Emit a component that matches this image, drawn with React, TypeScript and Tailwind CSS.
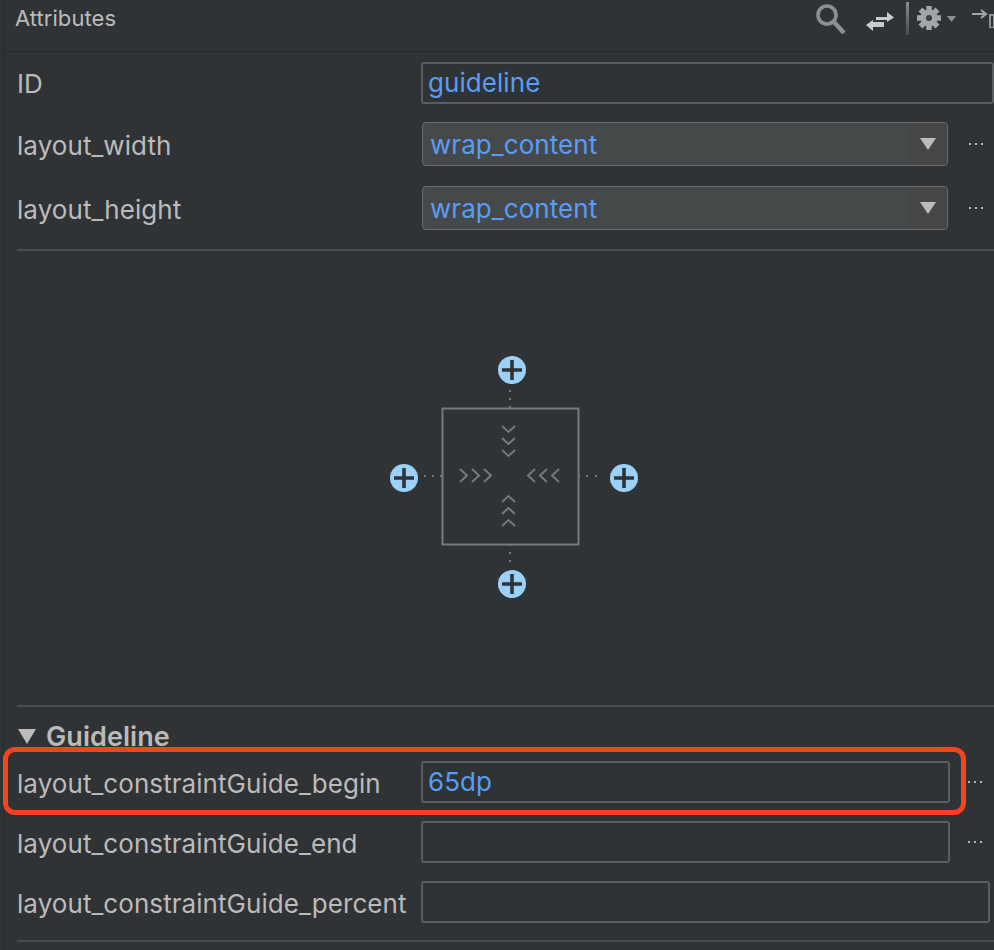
const Dots = () => (
  <svg width="16" height="4" viewBox="0 0 16 4" className="shrink-0">
    <rect x="1" y="1" width="2" height="2" fill="#b4b6b7" />
    <rect x="7" y="1" width="2" height="2" fill="#b4b6b7" />
    <rect x="13" y="1" width="2" height="2" fill="#b4b6b7" />
  </svg>
);

const Plus = ({ cx, cy }: { cx: number; cy: number }) => (
  <g>
    <circle cx={cx} cy={cy} r="14" fill="#9bd0f7" />
    <path
      d={`M${cx - 10} ${cy}H${cx + 10}M${cx} ${cy - 10}V${cy + 10}`}
      stroke="#2f3336"
      strokeWidth="3.6"
    />
  </g>
);

const Gear = () => (
  <svg width="24" height="24" viewBox="0 0 24 24" className="ml-[8px] mt-[6px]">
    {[0, 45, 90, 135].map((angle) => (
      <rect key={angle} x="9.25" y="0" width="5.5" height="24" fill="#a3a5a6" transform={`rotate(${angle} 12 12)`} />
    ))}
    <circle cx="12" cy="12" r="8.5" fill="#a3a5a6" />
    <circle cx="12" cy="12" r="3" fill="#3a3d3f" />
  </svg>
);

const ConstraintWidget = () => {
  const dots = [
    [130, 46],
    [130, 54],
    [130, 62],
    [45, 131],
    [53, 131],
    [61, 131],
    [199, 131],
    [207, 131],
    [216, 131],
    [130, 200],
    [130, 208],
    [130, 216],
  ];
  return (
    <svg width="270" height="260" viewBox="0 0 270 260">
      <rect x="62.5" y="63.5" width="136" height="136" fill="none" stroke="#77797a" strokeWidth="2" />
      {dots.map(([x, y]) => (
        <rect key={`${x}-${y}`} x={x - 1} y={y - 1} width="2" height="2" fill="#77797a" />
      ))}
      <g fill="none" stroke="#77797a" strokeWidth="2">
        <path d="M122 81l6.5 6 6.5-6M122 93l6.5 6 6.5-6M122 105l6.5 6 6.5-6" />
        <path d="M122 157l6.5-6 6.5 6M122 169l6.5-6 6.5 6M122 181l6.5-6 6.5 6" />
        <path d="M80 124l7 6.5-7 6.5M92 124l7 6.5-7 6.5M104 124l7 6.5-7 6.5" />
        <path d="M155 124l-7 6.5 7 6.5M167 124l-7 6.5 7 6.5M179 124l-7 6.5 7 6.5" />
      </g>
      <Plus cx={132} cy={25} />
      <Plus cx={24} cy={133} />
      <Plus cx={244} cy={133} />
      <Plus cx={132} cy={239} />
    </svg>
  );
};

const Select = ({ value }: { value: string }) => (
  <div className="ml-px flex h-[44px] w-[526px] overflow-hidden rounded-[4px] border border-[#6a6d6f] bg-[#45494a]">
    <div className="flex-1 pl-[7px] pt-px leading-[42px] text-[#589df6]">{value}</div>
    <div className="flex w-[39px] items-center justify-center bg-[#464647]">
      <svg width="16" height="12" viewBox="0 0 16 12">
        <path d="M0 0H16L8 12Z" fill="#bcbcbc" />
      </svg>
    </div>
  </div>
);

const Input = ({ value, width }: { value?: string; width: string }) => (
  <div className={`h-[42px] rounded-[3px] border-2 border-[#5b5e60] pl-[5px] leading-[38px] text-[#589df6] ${width}`}>
    {value}
  </div>
);

const Label = ({ text }: { text: string }) => <div className="w-[404px] shrink-0 pt-[3px]">{text}</div>;

export default function App() {
  return (
    <div className="h-[950px] w-[994px] overflow-hidden bg-[#303335] pl-[3px] font-['Inter',sans-serif] text-[26px] tracking-[0.06px] text-[#bbbbbb]">
      <div className="h-full border-l border-[#26282a]">
        <div className="flex h-[52px] items-start border-b border-[#26282a]">
          <div className="pl-[11px] pt-[5px] text-[22px] leading-[26px]">Attributes</div>
          <div className="ml-auto flex items-start">
            <svg width="30" height="30" viewBox="0 0 30 30" className="mt-[4px]">
              <circle cx="11" cy="11" r="9" fill="none" stroke="#8d8f90" strokeWidth="3.6" />
              <path d="M18 18l10 11" stroke="#8d8f90" strokeWidth="4.4" />
            </svg>
            <svg width="28" height="22" viewBox="0 0 28 22" className="ml-[20px] mt-[10px]">
              <path d="M10 7H21V2L28 7.5L21 12V10H10Z" fill="#c9cbcc" />
              <path d="M18 12H7V10L0 15L7 21V17H18Z" fill="#c9cbcc" />
            </svg>
            <div className="ml-[12px] mt-[2px] h-[33px] w-[3px] bg-gradient-to-b from-[#8a8c8d] to-[#4a4d4e]" />
            <Gear />
            <svg width="9" height="6" viewBox="0 0 9 6" className="ml-[6px] mt-[16px]">
              <path d="M0 0H9L4.5 6Z" fill="#8d8f90" />
            </svg>
            <svg width="22" height="20" viewBox="0 0 22 20" className="ml-[16px] mt-[8px]">
              <path d="M0 6H13M9 2l5 4-5 4" fill="none" stroke="#a3a5a6" strokeWidth="2" />
              <path d="M18 7H22V20H18Z" fill="none" stroke="#8d8f90" strokeWidth="2" />
            </svg>
          </div>
        </div>

        <div className="pl-[13px]">
          <div className="mt-[10px] flex items-center">
            <div className="w-[404px] shrink-0">ID</div>
            <div className="h-[42px] flex-1 rounded-[3px] border-2 border-[#5b5e60] pl-[5px] leading-[38px] text-[#589df6]">
              guideline
            </div>
          </div>
          <div className="mt-[18px] flex items-center">
            <Label text="layout_width" />
            <Select value="wrap_content" />
            <div className="ml-[20px]">
              <Dots />
            </div>
          </div>
          <div className="mt-[20px] flex items-center">
            <Label text="layout_height" />
            <Select value="wrap_content" />
            <div className="ml-[20px]">
              <Dots />
            </div>
          </div>
          <div className="mt-[19px] h-[2px] bg-[#4b4e50]" />

          <div className="h-[454px] pl-[363px] pt-[94px]">
            <ConstraintWidget />
          </div>

          <div className="h-[2px] bg-[#4b4e50]" />
          <div className="mt-[15px] flex h-[28px] items-center gap-[10px] text-[27px] font-semibold leading-none text-[#bbbbbb]">
            <svg width="18" height="15" viewBox="0 0 18 15" className="ml-[1px]">
              <path d="M0 0H18L9 15Z" fill="#bbbbbb" />
            </svg>
            Guideline
          </div>

          <div className="relative mt-[11px] flex items-center">
            <div className="absolute left-[-14px] top-[-14px] h-[68px] w-[963px] rounded-[12px] border-[5px] border-[#f4431f]" />
            <Label text="layout_constraintGuide_begin" />
            <Input value="65dp" width="w-[529px]" />
            <div className="ml-[17px]">
              <Dots />
            </div>
          </div>
          <div className="mt-[18px] flex items-center">
            <Label text="layout_constraintGuide_end" />
            <Input width="w-[529px]" />
            <div className="ml-[17px]">
              <Dots />
            </div>
          </div>
          <div className="mt-[18px] flex items-center">
            <Label text="layout_constraintGuide_percent" />
            <Input width="w-[569px]" />
          </div>
          <div className="mt-[17px] h-[2px] bg-[#4b4e50]" />
        </div>
      </div>
    </div>
  );
}
